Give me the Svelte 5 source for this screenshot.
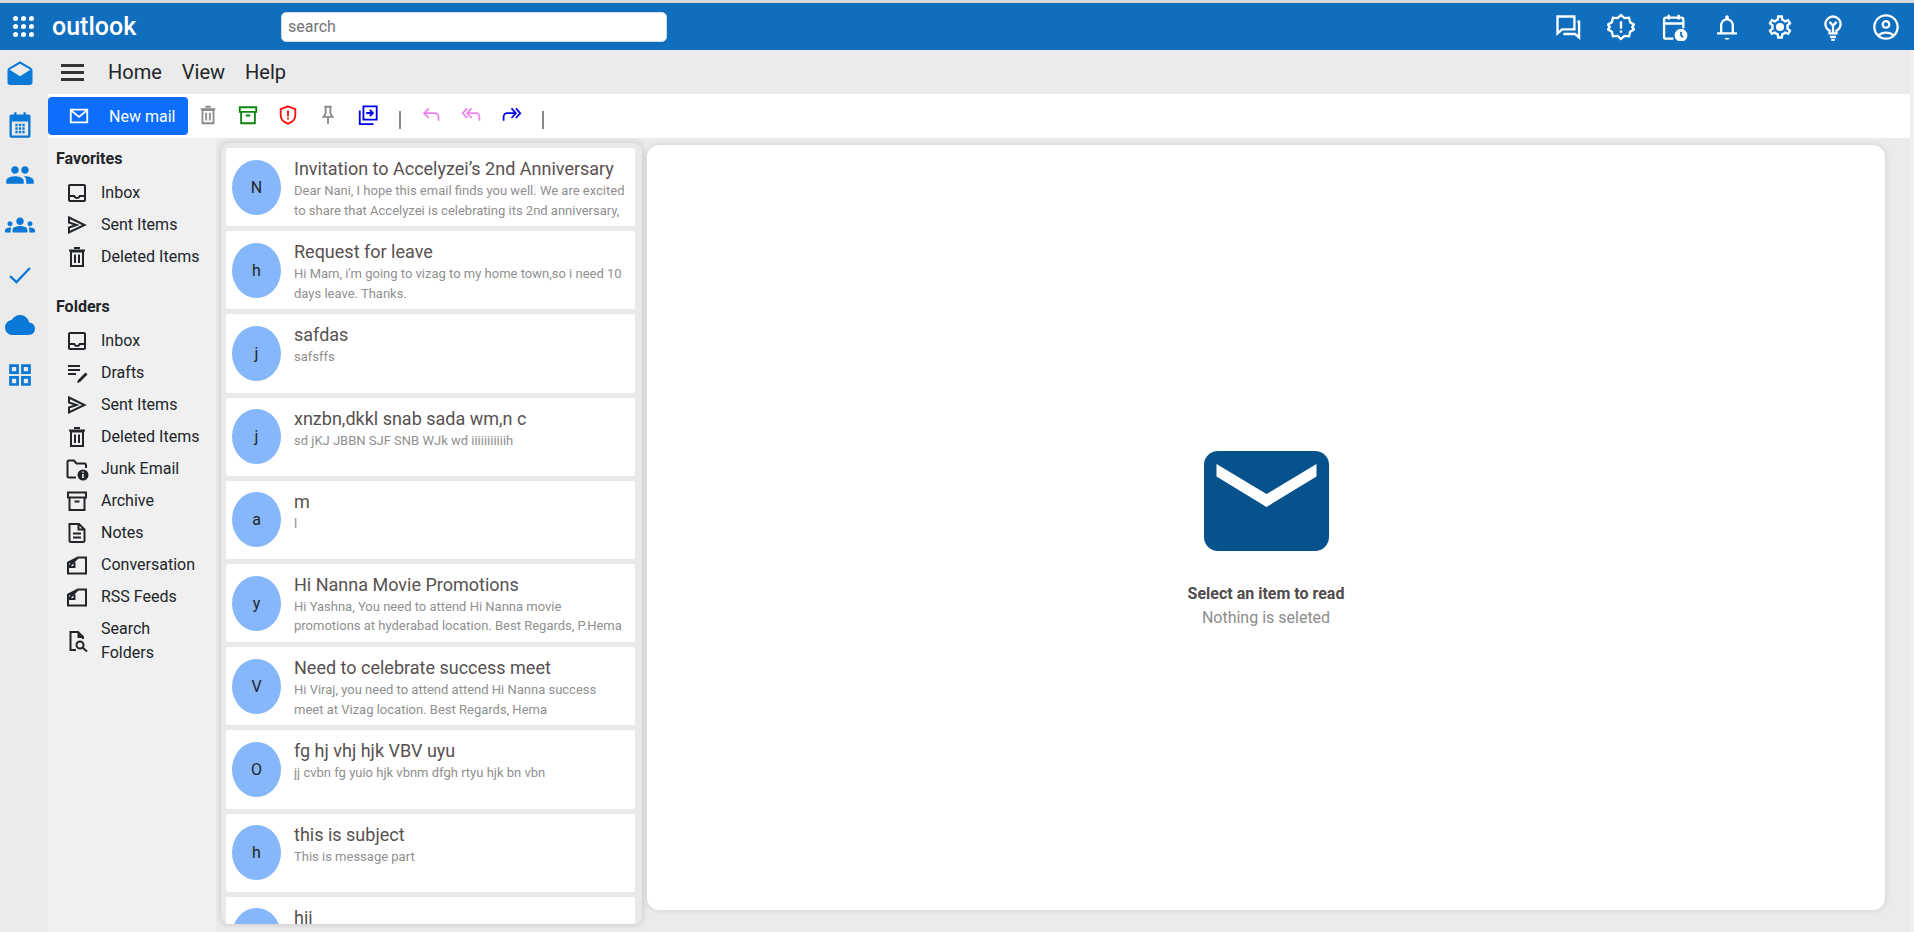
<script>
  const railIcons = [
    { name: 'drafts', size: 30 },
    { name: 'calendar', size: 28 },
    { name: 'people', size: 30 },
    { name: 'groups', size: 30 },
    { name: 'check', size: 28 },
    { name: 'cloud', size: 30 },
    { name: 'grid', size: 26 }
  ];
  const topIcons = ['chat', 'releases', 'schedule', 'bell', 'gear', 'bulb', 'account'];

  const favorites = [
    { name: 'Inbox', icon: 'inbox' },
    { name: 'Sent Items', icon: 'send' },
    { name: 'Deleted Items', icon: 'trash' }
  ];

  const folders = [
    { name: 'Inbox', icon: 'inbox' },
    { name: 'Drafts', icon: 'notes' },
    { name: 'Sent Items', icon: 'send' },
    { name: 'Deleted Items', icon: 'trash' },
    { name: 'Junk Email', icon: 'junk' },
    { name: 'Archive', icon: 'archive' },
    { name: 'Notes', icon: 'article' },
    { name: 'Conversation', icon: 'convo' },
    { name: 'RSS Feeds', icon: 'convo' },
    { name: 'Search Folders', icon: 'search' }
  ];

  const mails = [
    { from: 'N', subject: 'Invitation to Accelyzei’s 2nd Anniversary', body: 'Dear Nani, I hope this email finds you well. We are excited to share that Accelyzei is celebrating its 2nd anniversary,' },
    { from: 'h', subject: 'Request for leave', body: "Hi Mam, i'm going to vizag to my home town,so i need 10 days leave. Thanks." },
    { from: 'j', subject: 'safdas', body: 'safsffs' },
    { from: 'j', subject: 'xnzbn,dkkl snab sada wm,n c', body: 'sd jKJ JBBN SJF SNB WJk wd iiiiiiiiiiih' },
    { from: 'a', subject: 'm', body: 'l' },
    { from: 'y', subject: 'Hi Nanna Movie Promotions', body: 'Hi Yashna, You need to attend Hi Nanna movie promotions at hyderabad location. Best Regards, P.Hema' },
    { from: 'V', subject: 'Need to celebrate success meet', body: 'Hi Viraj, you need to attend attend Hi Nanna success meet at Vizag location. Best Regards, Hema' },
    { from: 'O', subject: 'fg hj vhj hjk VBV uyu', body: 'jj cvbn fg yuio hjk vbnm dfgh rtyu hjk bn vbn' },
    { from: 'h', subject: 'this is subject', body: 'This is message part' },
    { from: 'h', subject: 'hii', body: '' }
  ];

  // filled shapes use fill, outlined ones use class "s"
  const icons = {
    drafts: '<path d="M21.99 8c0-.72-.37-1.35-.94-1.7L12 1 2.95 6.3C2.38 6.65 2 7.28 2 8v10c0 1.1.9 2 2 2h16c1.1 0 2-.9 2-2l-.01-10zM12 13L3.74 7.84 12 3l8.26 4.84L12 13z"/>',
    calendar: '<path fill-rule="evenodd" d="M7 1h2v2h6V1h2v2h2.5A1.5 1.5 0 0 1 21 4.5v17a1.5 1.5 0 0 1-1.5 1.5h-15A1.5 1.5 0 0 1 3 21.500v-17A1.500 1.500 0 0 1 4.500 3H7zM5 9v12h14V9zM8 11h2v2H8zm3 0h2v2h-2zm3 0h2v2h-2zM8 14h2v2H8zm3 0h2v2h-2zm3 0h2v2h-2zM8 17h2v2H8zm3 0h2v2h-2zm3 0h2v2h-2z"/>',
    people: '<path d="M16 11c1.66 0 2.99-1.34 2.99-3S17.66 5 16 5c-1.66 0-3 1.34-3 3s1.34 3 3 3zm-8 0c1.66 0 2.99-1.34 2.99-3S9.66 5 8 5C6.34 5 5 6.34 5 8s1.34 3 3 3zm0 2c-2.33 0-7 1.17-7 3.5V19h14v-2.5c0-2.33-4.67-3.5-7-3.5zm8 0c-.29 0-.62.02-.97.05 1.16.84 1.97 1.97 1.97 3.45V19h6v-2.5c0-2.33-4.67-3.5-7-3.5z"/>',
    groups: '<path d="M12 12.75c1.63 0 3.07.39 4.24.9 1.08.48 1.76 1.56 1.76 2.73V18H6v-1.61c0-1.18.68-2.26 1.76-2.73 1.17-.52 2.61-.91 4.24-.91zM4 13c1.1 0 2-.9 2-2s-.9-2-2-2-2 .9-2 2 .9 2 2 2zm1.13 1.1c-.37-.06-.74-.1-1.13-.1-.99 0-1.93.21-2.78.58C.48 14.900 0 15.620 0 16.430V18h4.500v-1.610c0-.83.23-1.610.63-2.290zM20 13c1.100 0 2-.9 2-2s-.9-2-2-2-2 .9-2 2 .9 2 2 2zm4 3.430c0-.81-.48-1.530-1.220-1.850-.85-.37-1.790-.58-2.780-.58-.39 0-.76.04-1.130.1.4.68.63 1.460.63 2.290V18H24v-1.570zM12 6c1.660 0 3 1.340 3 3s-1.340 3-3 3-3-1.340-3-3 1.340-3 3-3z"/>',
    check: '<path class="s" d="M3.500 13l5.500 5L20.500 6"/>',
    cloud: '<path d="M19.350 10.040C18.670 6.590 15.640 4 12 4 9.110 4 6.600 5.640 5.350 8.040 2.340 8.360 0 10.910 0 14c0 3.310 2.690 6 6 6h13c2.760 0 5-2.240 5-5 0-2.640-2.050-4.780-4.650-4.960z"/>',
    grid: '<path fill-rule="evenodd" d="M2 2h9v9H2zm2.500 2.500v4h4v-4zM13 2h9v9h-9zm2.500 2.500v4h4v-4zM2 13h9v9H2zm2.500 2.500v4h4v-4zM13 13h9v9h-9zm2.500 2.500v4h4v-4z"/>',
    chat: '<path class="s" d="M3 3h14.500v11H7l-4 3.500zM20 7.500h1.500V21L18 18H8"/>',
    releases: '<path class="s" d="M12 1.800l3 2.600 3.900-.4.900 3.900 3.400 2.100-1.600 2 1.600 2-3.400 2.100-.9 3.900-3.900-.4-3 2.600-3-2.600-3.900.4-.9-3.900L.8 14l1.600-2-1.600-2 3.400-2.100.9-3.900 3.900.4z"/><path d="M11 7h2v6.500h-2zM11 15h2v2h-2z"/>',
    schedule: '<path class="s" d="M11.500 22H5a1.500 1.500 0 0 1-1.500-1.500v-15A1.500 1.500 0 0 1 5 4h13.500A1.500 1.500 0 0 1 20 5.500V13M3.500 9H20M7.500 1.500v4M16 1.500v4"/><circle cx="18" cy="19" r="5.500"/><path fill="none" stroke="#106ebe" stroke-width="1.500" d="M18 16v3.200l2 1.300"/>',
    bell: '<path d="M12 23c1.100 0 2-.6 2-1.500h-4c0 .9.900 1.500 2 1.500zm6-6.500V11c0-3.070-1.630-5.640-4.500-6.320V3.500c0-.83-.67-1.500-1.500-1.500s-1.500.67-1.500 1.500v1.180C7.640 5.360 6 7.920 6 11v5.500H3.500v2h17v-2zm-2 0H8V11c0-2.480 1.510-4.500 4-4.500s4 2.020 4 4.500z"/>',
    gear: '<path d="M19.430 12.980c.04-.32.07-.64.07-.98 0-.34-.03-.66-.07-.98l2.110-1.650c.19-.15.24-.42.12-.64l-2-3.460c-.09-.16-.26-.25-.44-.25-.06 0-.12.01-.17.03l-2.490 1c-.52-.4-1.080-.73-1.690-.98l-.38-2.650C14.460 2.180 14.250 2 14 2h-4c-.25 0-.46.18-.49.42l-.38 2.650c-.61.25-1.170.59-1.690.98l-2.490-1c-.06-.02-.12-.03-.18-.03-.17 0-.34.09-.43.25l-2 3.460c-.13.22-.07.49.12.64l2.110 1.650c-.04.32-.07.65-.07.98 0 .33.03.66.07.98l-2.110 1.650c-.19.15-.24.42-.12.64l2 3.460c.09.16.26.25.44.25.06 0 .12-.01.17-.03l2.490-1c.52.4 1.080.73 1.690.98l.38 2.650c.03.24.24.42.49.42h4c.25 0 .46-.18.49-.42l.38-2.650c.61-.25 1.170-.59 1.690-.98l2.490 1c.06.02.12.03.18.03.17 0 .34-.09.43-.25l2-3.460c.12-.22.07-.49-.12-.64l-2.110-1.650zm-1.980-1.710c.04.31.05.52.05.73 0 .21-.02.43-.05.73l-.14 1.130.89.7 1.080.84-.7 1.210-1.270-.51-1.040-.42-.9.68c-.43.32-.84.56-1.250.73l-1.060.43-.16 1.130-.2 1.350h-1.400l-.19-1.350-.16-1.130-1.060-.43c-.43-.18-.83-.41-1.230-.71l-.91-.7-1.060.43-1.270.51-.7-1.210 1.080-.84.89-.7-.14-1.130c-.03-.31-.05-.54-.05-.74s.02-.43.05-.73l.14-1.130-.89-.7-1.080-.84.7-1.210 1.270.51 1.040.42.9-.68c.43-.32.84-.56 1.250-.73l1.060-.43.16-1.130.2-1.350h1.390l.19 1.350.16 1.130 1.060.43c.43.18.83.41 1.230.71l.91.7 1.060-.43 1.270-.51.7 1.210-1.070.85-.89.7.14 1.130z"/><circle cx="12" cy="12" r="3.500"/>',
    bulb: '<path class="s" d="M9 17.500v-2.300C6.800 14 5.500 11.800 5.500 9.500a6.500 6.500 0 0 1 13 0c0 2.300-1.300 4.500-3.500 5.700v2.300zM9.500 20.500h5M10.500 23h3M9 7.500l3 3.500 3-3.500M12 11v6"/>',
    account: '<path d="M12 1C5.930 1 1 5.930 1 12s4.930 11 11 11 11-4.930 11-11S18.070 1 12 1zM6.900 19.400C8.300 18.400 10.100 17.800 12 17.800s3.700.6 5.100 1.600c-1.400 1.100-3.200 1.700-5.100 1.700s-3.700-.6-5.100-1.700zm11.700-1.500C16.800 16.500 14.500 15.800 12 15.800s-4.800.7-6.600 2.100C3.900 16.300 3 14.300 3 12c0-5 4-9 9-9s9 4 9 9c0 2.300-.9 4.300-2.400 5.900zM12 6C9.900 6 8.200 7.700 8.200 9.800s1.700 3.800 3.800 3.800 3.800-1.700 3.800-3.800S14.100 6 12 6zm0 5.700c-1 0-1.800-.8-1.800-1.900S11 7.900 12 7.900s1.800.8 1.800 1.900-.8 1.900-1.800 1.900z"/>',
    inbox: '<path d="M19 3H5c-1.100 0-2 .9-2 2v14c0 1.100.9 2 2 2h14c1.100 0 2-.9 2-2V5c0-1.100-.9-2-2-2zm0 16H5v-3h3.560c.69 1.190 1.970 2 3.450 2s2.750-.81 3.450-2H19v3zm0-5h-4.990c0 1.100-.9 2-2 2s-2-.9-2-2H5V5h14v9z"/>',
    send: '<path class="s" d="M4 4.500l15.500 7.500L4 19.500v-5l7.500-2.500L4 9.500z"/>',
    trash: '<path class="s" d="M6 6.500h12V21H6zM4 5.500h16M9 3h6M10 9.500v8.500M14 9.500v8.500"/>',
    notes: '<path class="s" d="M3 5h12M3 9h12M3 13h8"/><path d="M20.500 11.500l2 2-7.500 7.500-3 1 1-3z"/>',
    junk: '<path class="s" d="M11 20.500H4a1.500 1.500 0 0 1-1.500-1.500V5A1.500 1.500 0 0 1 4 3.500h5l2.500 3h8A1.500 1.500 0 0 1 21 8v3"/><circle cx="18" cy="18" r="5.500"/><path fill="none" stroke="#f0f0f0" stroke-width="1.600" d="M18 17v4M18 14.500v1.300"/>',
    archive: '<path class="s" d="M3 3.500h18v5H3zM4.500 8.500V21h15V8.500M9.500 12.500h5"/>',
    article: '<path class="s" d="M4.500 3H14l5.500 5.500V19.500A1.500 1.500 0 0 1 18 21H6a1.500 1.500 0 0 1-1.500-1.500zM13.500 3v5.500h6M8 12.500h8M8 16.500h8"/>',
    convo: '<path class="s" d="M3 9.500h6.500M13 4.500h8v16H3v-11zM13 4.500L3.500 14M9.500 9.500V14H3.500"/>',
    search: '<path class="s" d="M11 21H5.500V3H13l5 5v2"/><path d="M12.500 3l6 6h-6z"/><circle class="s" cx="15" cy="16" r="3.500"/><path class="s" d="M17.500 18.500l4.500 4"/>',
    pin: '<path class="s" d="M8 3h8M9.500 3v7.500L7 14h10l-2.500-3.500V3M12 14v8"/>',
    move: '<path class="s" d="M7 2.500h14.500V17H7zM3 7v15h15M10 9.800h7M14 6.500l3.300 3.300-3.300 3.300"/>',
    shield: '<path class="s" d="M12 2.500l8 3v6.500c0 4.500-3.500 8-8 9.500-4.500-1.500-8-5-8-9.500V5.500z"/><path d="M11 7h2v6.500h-2zM11 15h2v2h-2z"/>',
    mail: '<path class="s" d="M3 5h18v14H3zM3.500 6l8.500 7 8.500-7"/>',
    reply: '<path class="s" d="M9 5L3.500 10.500 9 16M4 10.500h12a4 4 0 0 1 4 4V19"/>',
    replyAll: '<path class="s" d="M7 5L2 10.500 7 16M12 5L7 10.500 12 16M8 10.500h9a4 4 0 0 1 4 4V19"/>',
    forward: '<path class="s" d="M12 5l5 5.500-5 5.500M17 5l5 5.500-5 5.500M16 10.500H7a4 4 0 0 0-4 4V19"/>'
  };

  const tools = [
    { icon: 'trash', color: '#8a8a8a' },
    { icon: 'archive', color: '#0a850a' },
    { icon: 'shield', color: '#f50d0d' },
    { icon: 'pin', color: '#8a8a8a' },
    { icon: 'move', color: '#0000f0' }
  ];

  const replies = [
    { icon: 'reply', color: '#ee82ee' },
    { icon: 'replyAll', color: '#ee82ee' },
    { icon: 'forward', color: '#0000f0' }
  ];
</script>

{#snippet icon(name, size = 24, color = 'currentColor')}
  <svg class="icon" width={size} height={size} viewBox="0 0 24 24" style:color={color} fill="currentColor">
    {@html icons[name]}
  </svg>
{/snippet}

{#snippet folderRow(item)}
  <li class="folder-row">
    {@render icon(item.icon)}
    <span>{item.name}</span>
  </li>
{/snippet}

<div class="app">
  <header class="topbar">
    <div class="waffle">
      {#each Array(9) as _}<i></i>{/each}
    </div>
    <div class="logo">outlook</div>
    <input class="search" type="text" placeholder="search" />
    <div class="top-icons">
      {#each topIcons as name}
        {@render icon(name, 28, '#fff')}
      {/each}
    </div>
  </header>

  <div class="body">
    <nav class="rail">
      {#each railIcons as item}
        <div class="rail-item">{@render icon(item.name, item.size, '#0a78d6')}</div>
      {/each}
    </nav>

    <div class="main">
      <div class="menu">
        <div class="burger"><i></i><i></i><i></i></div>
        <span>Home</span>
        <span>View</span>
        <span>Help</span>
      </div>

      <div class="toolbar">
        <button class="new-mail">
          {@render icon('mail', 22, '#fff')}
          <span>New mail</span>
        </button>
        <div class="tools">
          {#each tools as t}
            <div class="tool">{@render icon(t.icon, 22, t.color)}</div>
          {/each}
          <b class="pipe"></b>
          {#each replies as t}
            <div class="tool">{@render icon(t.icon, 21, t.color)}</div>
          {/each}
          <b class="pipe"></b>
        </div>
      </div>

      <div class="content">
        <aside class="folders">
          <h4>Favorites</h4>
          <ul>
            {#each favorites as item}{@render folderRow(item)}{/each}
          </ul>
          <h4 class="second">Folders</h4>
          <ul>
            {#each folders as item}{@render folderRow(item)}{/each}
          </ul>
        </aside>

        <section class="list">
          {#each mails as mail}
            <article class="card">
              <div class="avatar">{mail.from}</div>
              <div class="text">
                <div class="subject">{mail.subject}</div>
                <p class="preview">{mail.body}</p>
              </div>
            </article>
          {/each}
        </section>

        <section class="reader">
          <svg class="envelope" width="125" height="100" viewBox="0 0 125 100">
            <rect width="125" height="100" rx="14" fill="#05528c" />
            <path d="M12.500 13L62.500 43 112.500 13V25.500L62.500 56 12.500 25.500z" fill="#fff" />
          </svg>
          <div class="r-title">Select an item to read</div>
          <div class="r-sub">Nothing is seleted</div>
        </section>
      </div>
    </div>
  </div>
</div>

<style>
  :global(body) {
    margin: 0;
    font-family: Roboto, sans-serif;
    background: #f0f0f0;
  }

  .app {
    display: flex;
    flex-direction: column;
    height: 100vh;
    overflow: hidden;
    border-top: 3px solid #d8d8d8;
    box-sizing: border-box;
  }

  .icon {
    flex: none;
    display: block;
  }

  .icon :global(.s) {
    fill: none;
    stroke: currentColor;
    stroke-width: 2;
  }

  .topbar {
    flex: none;
    height: 47px;
    display: flex;
    align-items: center;
    background: #106ebe;
    position: relative;
  }

  .waffle {
    display: grid;
    grid-template-columns: repeat(3, 5px);
    gap: 3px;
    margin-left: 13px;
  }

  .waffle i {
    width: 5px;
    height: 5px;
    border-radius: 50%;
    background: #fff;
  }

  .logo {
    margin-left: 18px;
    width: 229px;
    color: #fff;
    font-size: 25px;
    font-weight: 500;
  }

  .search {
    width: 386px;
    height: 30px;
    box-sizing: border-box;
    border: 1px solid #cfd8e3;
    border-radius: 5px;
    padding: 0 6px;
    font: 16px Roboto, sans-serif;
    outline: none;
  }

  .search::placeholder {
    color: #757575;
  }

  .top-icons {
    margin-left: auto;
    display: flex;
    gap: 25px;
    margin-right: 14px;
  }

  .body {
    flex: 1;
    display: flex;
    min-height: 0;
  }

  .rail {
    flex: none;
    width: 48px;
    background: #ebebeb;
  }

  .rail-item {
    height: 50px;
    display: flex;
    align-items: center;
    justify-content: center;
    padding-right: 8px;
    box-sizing: border-box;
  }

  .main {
    flex: 1;
    min-width: 0;
    display: flex;
    flex-direction: column;
    margin-right: 4px;
  }

  .menu {
    flex: none;
    height: 44px;
    display: flex;
    align-items: center;
    gap: 20px;
    background: #ebebeb;
    font-size: 20px;
    color: #212529;
    padding-left: 13px;
  }

  .burger {
    width: 23px;
    display: flex;
    flex-direction: column;
    gap: 4px;
    margin-right: 4px;
  }

  .burger i {
    height: 3px;
    background: #333;
  }

  .toolbar {
    flex: none;
    height: 44px;
    display: flex;
    align-items: center;
    background: #fff;
  }

  .new-mail {
    width: 140px;
    height: 38px;
    display: flex;
    align-items: center;
    gap: 19px;
    padding: 0 0 0 20px;
    border: none;
    border-radius: 4px;
    background: #0d6efd;
    color: #fff;
    font: 16px Roboto, sans-serif;
  }

  .tools {
    display: flex;
    align-items: center;
  }

  .tool {
    width: 40px;
    display: flex;
    justify-content: center;
    margin-top: -3px;
  }

  .pipe {
    width: 2px;
    height: 18px;
    background: #8a8a8a;
    margin: 8px 10px 0 11px;
  }

  .content {
    flex: 1;
    min-height: 0;
    display: flex;
    background: #ebebeb;
  }

  .folders {
    flex: none;
    width: 168px;
    box-sizing: border-box;
    padding: 11px 0 0 8px;
    background: #f0f0f0;
    color: #212529;
    font-size: 16px;
  }

  .folders h4 {
    margin: 0;
    font-size: 16px;
    font-weight: 700;
    line-height: 20px;
  }

  .folders .second {
    margin-top: 24px;
  }

  .folders ul {
    list-style: none;
    margin: 8px 0 0;
    padding: 0;
  }

  .folder-row {
    display: flex;
    align-items: center;
    gap: 12px;
    padding: 4px 0 4px 9px;
    line-height: 24px;
  }

  .folder-row span {
    max-width: 100px;
  }

  .list {
    flex: none;
    width: 421px;
    box-sizing: border-box;
    margin: 5px 0 8px 5px;
    padding: 5px 7px 0 5px;
    display: flex;
    flex-direction: column;
    gap: 5px;
    overflow: hidden;
    background: #e9e9e9;
    border-radius: 8px;
    box-shadow: 0 0 6px rgba(0, 0, 0, 0.18);
  }

  .card {
    flex: none;
    height: 78.2px;
    display: flex;
    gap: 13px;
    box-sizing: border-box;
    padding: 0 8px 0 6px;
    background: #fff;
    border-radius: 2px;
  }

  .avatar {
    flex: none;
    width: 49px;
    height: 55px;
    align-self: center;
    display: flex;
    align-items: center;
    justify-content: center;
    border-radius: 50%;
    background: #86b7fa;
    color: #212529;
    font-size: 16px;
  }

  .text {
    min-width: 0;
    padding-top: 9px;
  }

  .subject {
    font-size: 18px;
    line-height: 24px;
    color: #575151;
    white-space: nowrap;
  }

  .preview {
    margin: 0;
    font-size: 13px;
    line-height: 19.5px;
    color: #8f8f8f;
    max-height: 39px;
    overflow: hidden;
  }

  .reader {
    flex: 1;
    margin: 7px 25px 22px 5px;
    padding-top: 26px;
    display: flex;
    flex-direction: column;
    align-items: center;
    justify-content: center;
    background: #fff;
    border-radius: 12px;
    box-shadow: 0 0 6px rgba(0, 0, 0, 0.12);
  }

  .envelope {
    margin-bottom: 31px;
  }

  .r-title {
    font-size: 16px;
    font-weight: 700;
    line-height: 24px;
    color: #524c4c;
  }

  .r-sub {
    font-size: 16px;
    line-height: 24px;
    color: #8c8c8c;
  }
</style>
